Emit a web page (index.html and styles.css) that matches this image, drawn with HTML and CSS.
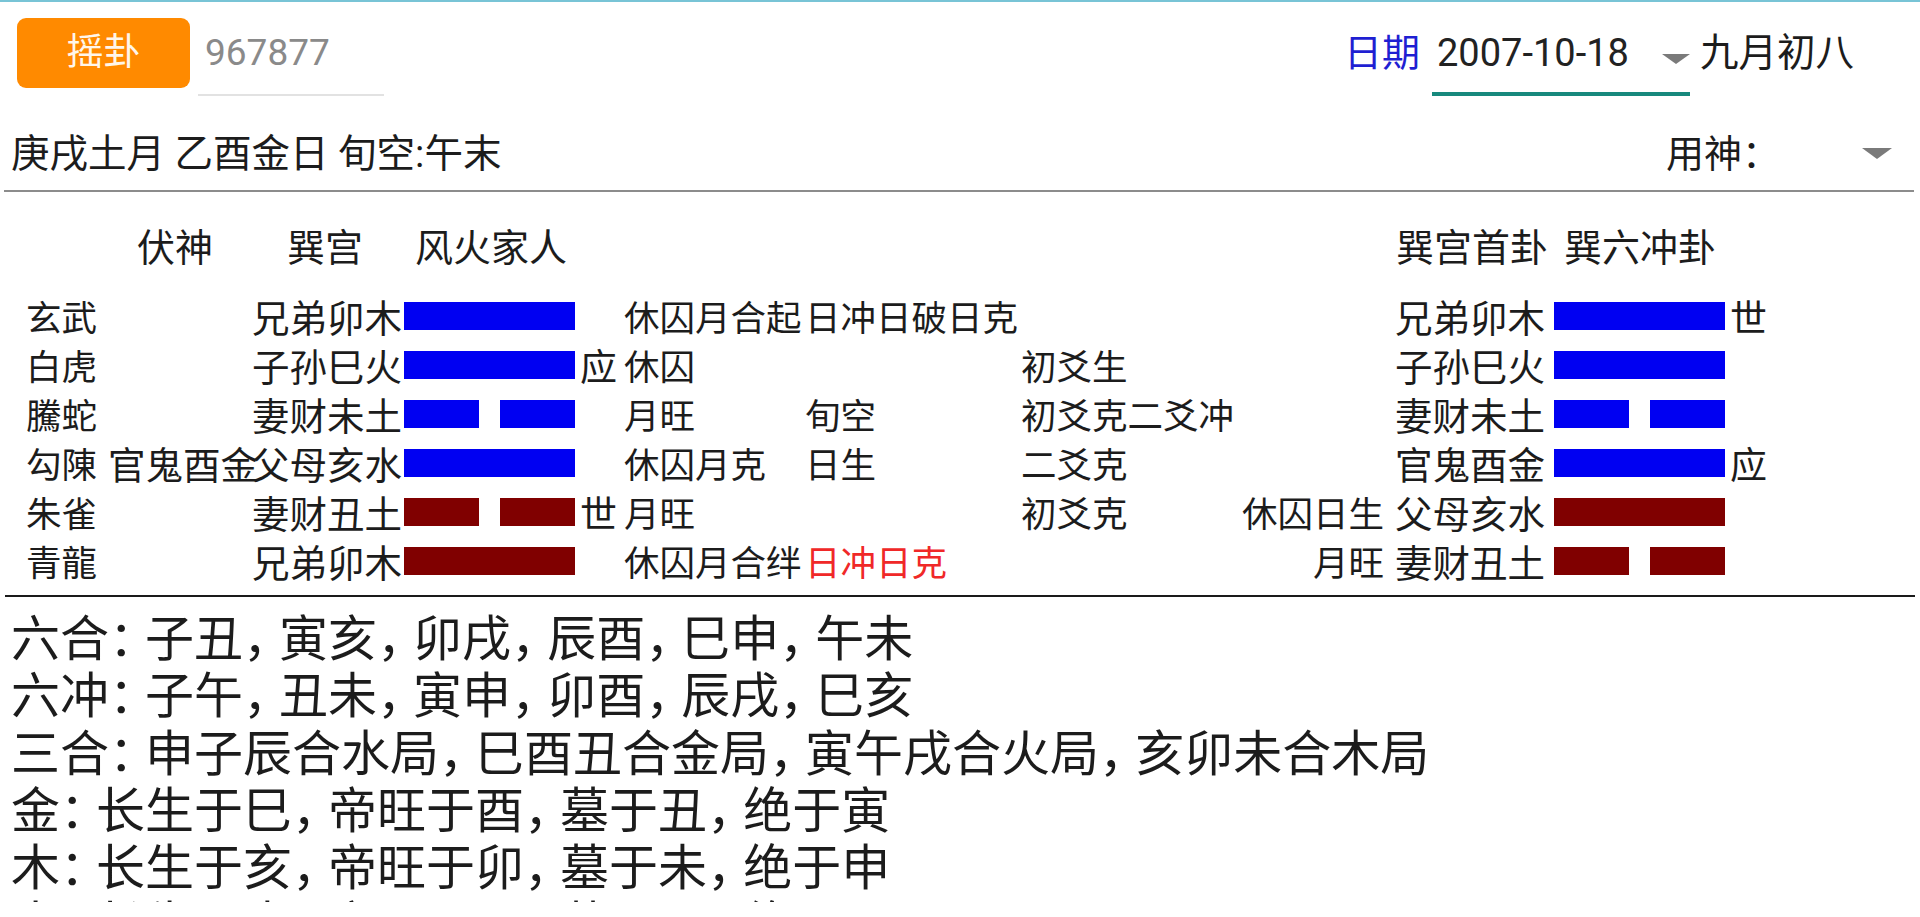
FILE: index.html
```html
<!DOCTYPE html>
<html lang="zh-CN">
<head>
<meta charset="utf-8">
<title>摇卦</title>
<link rel="stylesheet" href="styles.css">
</head>
<body>
<div class="topline"></div>
<header class="toolbar">
  <button class="shake">摇卦</button>
  <div class="field">967877</div>
  <div class="date-group">
    <span class="date-label">日期</span>
    <div class="date-field"><span class="date-text">2007-10-18</span><span class="caret"></span></div>
    <span class="lunar">九月初八</span>
  </div>
</header>
<div class="info">
  <span>庚戌土月 乙酉金日 旬空:午末</span>
  <div class="yongshen"><span>用神：</span><span class="caret caret-lg"></span></div>
</div>
<div class="rule"></div>
<section class="gua">
  <div class="gua-head">
    <span>伏神</span><span>巽宫</span><span>风火家人</span><span>巽宫首卦</span><span>巽六冲卦</span>
  </div>
  <div class="yao">
    <span>玄武</span><span></span><span class="name">兄弟卯木</span>
    <div class="line blue"><i></i></div><span class="mark"></span>
    <span>休囚月合起</span><span>日冲日破日克</span>
    <div class="tail"><span></span><span></span></div><span></span>
    <span class="name">兄弟卯木</span><div class="line blue"><i></i></div><span class="mark">世</span>
  </div>
  <div class="yao">
    <span>白虎</span><span></span><span class="name">子孙巳火</span>
    <div class="line blue"><i></i></div><span class="mark">应</span>
    <span>休囚</span><span></span>
    <div class="tail"><span>初爻生</span><span></span></div><span></span>
    <span class="name">子孙巳火</span><div class="line blue"><i></i></div><span class="mark"></span>
  </div>
  <div class="yao">
    <span>騰蛇</span><span></span><span class="name">妻财未土</span>
    <div class="line blue"><i></i><i></i></div><span class="mark"></span>
    <span>月旺</span><span>旬空</span>
    <div class="tail"><span>初爻克二爻冲</span><span></span></div><span></span>
    <span class="name">妻财未土</span><div class="line blue"><i></i><i></i></div><span class="mark"></span>
  </div>
  <div class="yao">
    <span>勾陳</span><span class="fu">官鬼酉金</span><span class="name">父母亥水</span>
    <div class="line blue"><i></i></div><span class="mark"></span>
    <span>休囚月克</span><span>日生</span>
    <div class="tail"><span>二爻克</span><span></span></div><span></span>
    <span class="name">官鬼酉金</span><div class="line blue"><i></i></div><span class="mark">应</span>
  </div>
  <div class="yao">
    <span>朱雀</span><span></span><span class="name">妻财丑土</span>
    <div class="line maroon"><i></i><i></i></div><span class="mark">世</span>
    <span>月旺</span><span></span>
    <div class="tail"><span>初爻克</span><span>休囚日生</span></div><span></span>
    <span class="name">父母亥水</span><div class="line maroon"><i></i></div><span class="mark"></span>
  </div>
  <div class="yao">
    <span>青龍</span><span></span><span class="name">兄弟卯木</span>
    <div class="line maroon"><i></i></div><span class="mark"></span>
    <span>休囚月合绊</span><span class="alert">日冲日克</span>
    <div class="tail"><span></span><span>月旺</span></div><span></span>
    <span class="name">妻财丑土</span><div class="line maroon"><i></i><i></i></div><span class="mark"></span>
  </div>
</section>
<div class="rule rule-dark"></div>
<section class="notes">
  <p>六合<span class="pu">：</span>子丑<span class="pu">，</span>寅亥<span class="pu">，</span>卯戌<span class="pu">，</span>辰酉<span class="pu">，</span>巳申<span class="pu">，</span>午未</p>
  <p>六冲<span class="pu">：</span>子午<span class="pu">，</span>丑未<span class="pu">，</span>寅申<span class="pu">，</span>卯酉<span class="pu">，</span>辰戌<span class="pu">，</span>巳亥</p>
  <p>三合<span class="pu">：</span>申子辰合水局<span class="pu">，</span>巳酉丑合金局<span class="pu">，</span>寅午戌合火局<span class="pu">，</span>亥卯未合木局</p>
  <p>金<span class="pu">：</span>长生于巳<span class="pu">，</span>帝旺于酉<span class="pu">，</span>墓于丑<span class="pu">，</span>绝于寅</p>
  <p>木<span class="pu">：</span>长生于亥<span class="pu">，</span>帝旺于卯<span class="pu">，</span>墓于未<span class="pu">，</span>绝于申</p>
  <p>水<span class="pu">：</span>长生于申<span class="pu">，</span>帝旺于子<span class="pu">，</span>墓于辰<span class="pu">，</span>绝于巳</p>
</section>
</body>
</html>
```

FILE: styles.css
```css
html, body {
  margin: 0;
  padding: 0;
  overflow: hidden;
  background: #ffffff;
}

body {
  font-family: Roboto, "Noto Sans CJK SC", sans-serif;
  font-size: 38px;
  color: #1c1c1c;
}

.topline {
  height: 2px;
  background: #78c4d6;
}

/* ---------- toolbar ---------- */
.toolbar {
  display: flex;
  align-items: flex-start;
  padding: 16px 66px 0 17px;
}

.shake {
  width: 173px;
  height: 70px;
  border: 0;
  border-radius: 9px;
  padding: 0;
  background: #ff8a00;
  color: #fff6ea;
  font-family: inherit;
  font-size: 37px;
  line-height: 70px;
}

.field {
  box-sizing: border-box;
  margin-left: 8px;
  width: 186px;
  height: 78px;
  padding-left: 7px;
  line-height: 70px;
  border-bottom: 2px solid #e2e2e2;
  color: #8a8a8a;
  font-size: 37px;
}

.date-group {
  margin-left: auto;
  display: flex;
  align-items: flex-start;
}

.date-label {
  line-height: 70px;
  color: #1f1fd2;
  margin-right: 12px;
}

.date-field {
  box-sizing: border-box;
  width: 258px;
  height: 78px;
  padding: 0 0 4px 5px;
  border-bottom: 4px solid #17897d;
  display: flex;
  align-items: center;
}

.date-text {
  font-size: 38px;
  color: #222;
}

.caret {
  width: 0;
  height: 0;
  border-left: 14px solid transparent;
  border-right: 14px solid transparent;
  border-top: 10px solid #7a7a7a;
}

.date-field .caret {
  margin-left: auto;
  margin-top: 12px;
  margin-right: 0;
}

.lunar {
  margin-left: 10px;
  line-height: 70px;
  font-size: 38.5px;
}

/* ---------- info row ---------- */
.info {
  box-sizing: border-box;
  height: 94px;
  padding: 14px 28px 0 11px;
  display: flex;
  align-items: center;
  font-size: 38.5px;
}

.yongshen {
  margin-left: auto;
  display: flex;
  align-items: center;
  font-size: 38px;
}

.caret-lg {
  margin-left: 82px;
  margin-top: 6px;
  border-left-width: 15px;
  border-right-width: 15px;
  border-top-width: 11px;
}

.rule {
  height: 2px;
  margin: 0 6px 0 4px;
  background: #8c8c8c;
}

.rule-dark {
  margin: 0 5px;
  background: #1a1a1a;
}

/* ---------- gua table ---------- */
.gua {
  padding: 25px 0 13px 0;
  white-space: nowrap;
  font-size: 35.5px;
}

.gua-head {
  display: grid;
  grid-template-columns: 150px 128px 981px 168px auto;
  padding-left: 137px;
  height: 49px;
  align-items: center;
  margin-bottom: 22px;
  font-size: 38px;
}

.yao {
  display: grid;
  grid-template-columns: 82px 144px 152px 171px 49px 181px 216px 363px 11px 159px 171px auto;
  padding-left: 26px;
  height: 49px;
  align-items: center;
}

.name,
.fu {
  font-size: 37.5px;
}

.line {
  height: 28px;
  display: flex;
  gap: 21px;
}

.line i {
  flex: 1;
  background: currentColor;
}

.blue {
  color: #0000f2;
}

.maroon {
  color: #800000;
}

.mark {
  padding-left: 5px;
  font-size: 37px;
}

.tail {
  display: flex;
  justify-content: space-between;
}

.alert {
  color: #f02828;
}

/* ---------- notes ---------- */
.notes {
  box-sizing: border-box;
  height: 305px;
  overflow: hidden;
  padding: 14px 0 0 11px;
  font-size: 49px;
  line-height: 57.3px;
  white-space: nowrap;
}

.notes p {
  margin: 0;
}

.pu {
  letter-spacing: -13px;
}
```
